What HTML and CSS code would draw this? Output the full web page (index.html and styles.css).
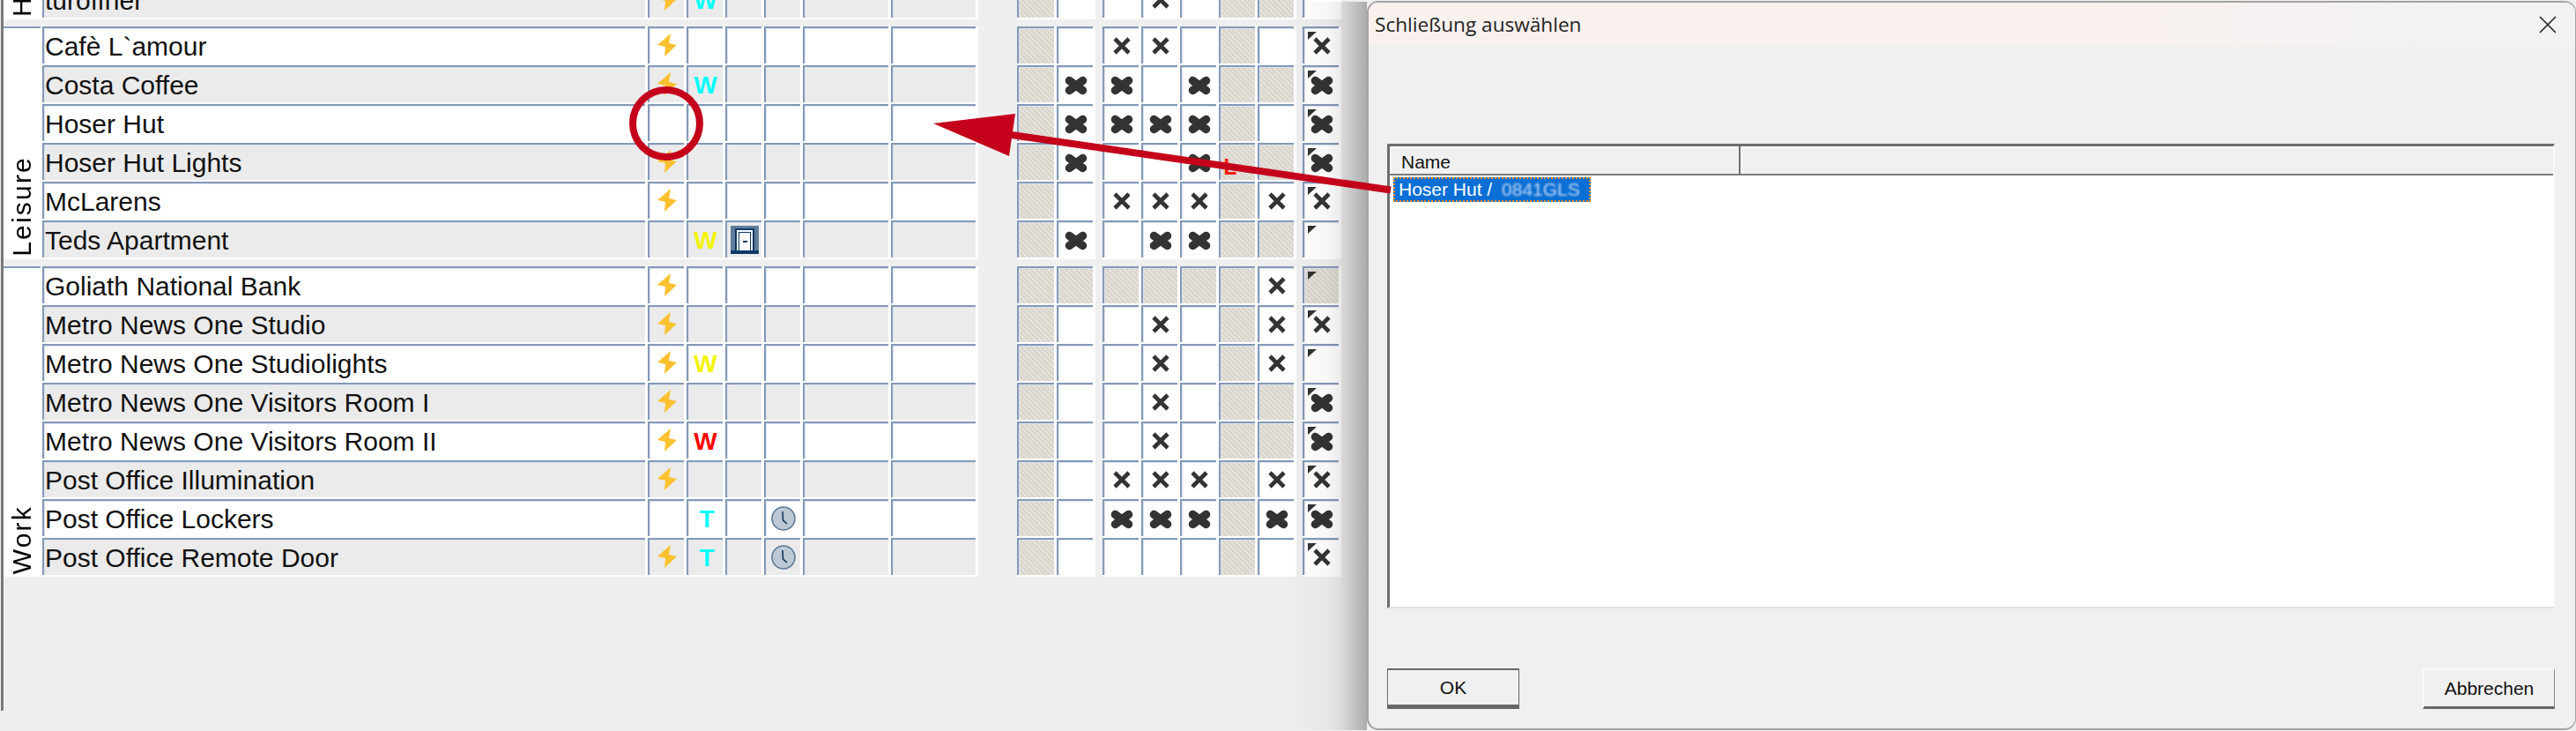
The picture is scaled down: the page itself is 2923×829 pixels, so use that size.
FILE: index.html
```html
<!DOCTYPE html>
<html lang="de">
<head>
    <meta charset="UTF-8">
    <title>Schließung auswählen</title>
    <link rel="stylesheet" href="styles.css">
</head>
<body>

    <svg class="defs">
        <symbol id="bolt" viewBox="0 0 22 26"><polygon points="15,0 0,13 9,15 8,26 22,13 13,11"/></symbol>
        <symbol id="thin" viewBox="0 0 22 22"><path d="M3 3 L19 19 M19 3 L3 19" fill="none" stroke="#333" stroke-width="4.6"/></symbol>
        <symbol id="heavy" viewBox="0 0 26 22"><path d="M5.5 5.5 L20.5 16.5 M20.5 5.5 L5.5 16.5" fill="none" stroke="#333" stroke-width="9.5" stroke-linecap="round"/></symbol>
        <symbol id="flag" viewBox="0 0 10 9"><polygon points="0,0 10,0 0,9" fill="#333"/></symbol>
        <symbol id="door" viewBox="0 0 32 32">
            <rect width="32" height="32" fill="#5f7d99"/>
            <rect x="5" y="3" width="22" height="26" fill="#0d3a66"/>
            <rect x="7" y="5" width="18" height="24" fill="#fff"/>
            <rect x="9" y="7" width="14" height="22" fill="#0d3a66"/>
            <rect x="10" y="8" width="12" height="21" fill="#fff"/>
            <rect x="14" y="17" width="5" height="2" fill="#0d3a66"/>
            <rect y="28" width="32" height="4" fill="#0d3a66"/>
        </symbol>
        <symbol id="clock" viewBox="0 0 28 28">
            <circle cx="14" cy="14" r="13" fill="#bcc8d4" stroke="#5d7a96" stroke-width="1.6"/>
            <path d="M13 6 L13.5 16 L18 20" fill="none" stroke="#12365c" stroke-width="1.6"/>
        </symbol>
    </svg>

    <div class="window">

        <!-- cut off at the top of the screenshot -->
        <section class="group first">
            <div class="group-label"><span>H</span></div>
            <div class="rows">
                <div class="row alt">
                    <div class="blk names">
                        <div class="cell name">turöffner</div>
                        <div class="cell"><svg class="bolt"><use href="#bolt"/></svg></div>
                        <div class="cell"><b class="w cyan">W</b></div>
                        <div class="cell"></div><div class="cell"></div><div class="cell"></div><div class="cell"></div>
                    </div>
                    <div class="blk two"><div class="cell hat"></div><div class="cell"></div></div>
                    <div class="blk five">
                        <div class="cell"></div>
                        <div class="cell"><svg class="x"><use href="#thin"/></svg></div>
                        <div class="cell"></div>
                        <div class="cell hat"></div>
                        <div class="cell hat"></div>
                    </div>
                    <div class="blk one"><div class="cell"></div></div>
                </div>
            </div>
        </section>

        <!-- Leisure -->
        <section class="group">
            <div class="group-label"><span>Leisure</span></div>
            <div class="rows">
                <div class="row">
                    <div class="blk names">
                        <div class="cell name">Cafè L`amour</div>
                        <div class="cell"><svg class="bolt"><use href="#bolt"/></svg></div>
                        <div class="cell"></div><div class="cell"></div><div class="cell"></div><div class="cell"></div><div class="cell"></div>
                    </div>
                    <div class="blk two"><div class="cell hat"></div><div class="cell"></div></div>
                    <div class="blk five">
                        <div class="cell"><svg class="x"><use href="#thin"/></svg></div>
                        <div class="cell"><svg class="x"><use href="#thin"/></svg></div>
                        <div class="cell"></div>
                        <div class="cell hat"></div>
                        <div class="cell"></div>
                    </div>
                    <div class="blk one"><div class="cell flagged"><svg class="flag"><use href="#flag"/></svg><svg class="x"><use href="#thin"/></svg></div></div>
                </div>
                <div class="row alt">
                    <div class="blk names">
                        <div class="cell name">Costa Coffee</div>
                        <div class="cell"><svg class="bolt"><use href="#bolt"/></svg></div>
                        <div class="cell"><b class="w cyan">W</b></div>
                        <div class="cell"></div><div class="cell"></div><div class="cell"></div><div class="cell"></div>
                    </div>
                    <div class="blk two"><div class="cell hat"></div><div class="cell"><svg class="xx"><use href="#heavy"/></svg></div></div>
                    <div class="blk five">
                        <div class="cell"><svg class="xx"><use href="#heavy"/></svg></div>
                        <div class="cell"></div>
                        <div class="cell"><svg class="xx"><use href="#heavy"/></svg></div>
                        <div class="cell hat"></div>
                        <div class="cell hat"></div>
                    </div>
                    <div class="blk one"><div class="cell flagged"><svg class="flag"><use href="#flag"/></svg><svg class="xx"><use href="#heavy"/></svg></div></div>
                </div>
                <div class="row">
                    <div class="blk names">
                        <div class="cell name">Hoser Hut</div>
                        <div class="cell"></div>
                        <div class="cell"></div><div class="cell"></div><div class="cell"></div><div class="cell"></div><div class="cell"></div>
                    </div>
                    <div class="blk two"><div class="cell hat"></div><div class="cell"><svg class="xx"><use href="#heavy"/></svg></div></div>
                    <div class="blk five">
                        <div class="cell"><svg class="xx"><use href="#heavy"/></svg></div>
                        <div class="cell"><svg class="xx"><use href="#heavy"/></svg></div>
                        <div class="cell"><svg class="xx"><use href="#heavy"/></svg></div>
                        <div class="cell hat"></div>
                        <div class="cell"></div>
                    </div>
                    <div class="blk one"><div class="cell flagged"><svg class="flag"><use href="#flag"/></svg><svg class="xx"><use href="#heavy"/></svg></div></div>
                </div>
                <div class="row alt">
                    <div class="blk names">
                        <div class="cell name">Hoser Hut Lights</div>
                        <div class="cell"><svg class="bolt"><use href="#bolt"/></svg></div>
                        <div class="cell"></div><div class="cell"></div><div class="cell"></div><div class="cell"></div><div class="cell"></div>
                    </div>
                    <div class="blk two"><div class="cell hat"></div><div class="cell"><svg class="xx"><use href="#heavy"/></svg></div></div>
                    <div class="blk five">
                        <div class="cell"></div>
                        <div class="cell"></div>
                        <div class="cell"><svg class="xx"><use href="#heavy"/></svg></div>
                        <div class="cell hat"><span class="mark">L</span></div>
                        <div class="cell hat"></div>
                    </div>
                    <div class="blk one"><div class="cell flagged"><svg class="flag"><use href="#flag"/></svg><svg class="xx"><use href="#heavy"/></svg></div></div>
                </div>
                <div class="row">
                    <div class="blk names">
                        <div class="cell name">McLarens</div>
                        <div class="cell"><svg class="bolt"><use href="#bolt"/></svg></div>
                        <div class="cell"></div><div class="cell"></div><div class="cell"></div><div class="cell"></div><div class="cell"></div>
                    </div>
                    <div class="blk two"><div class="cell hat"></div><div class="cell"></div></div>
                    <div class="blk five">
                        <div class="cell"><svg class="x"><use href="#thin"/></svg></div>
                        <div class="cell"><svg class="x"><use href="#thin"/></svg></div>
                        <div class="cell"><svg class="x"><use href="#thin"/></svg></div>
                        <div class="cell hat"></div>
                        <div class="cell"><svg class="x"><use href="#thin"/></svg></div>
                    </div>
                    <div class="blk one"><div class="cell flagged"><svg class="flag"><use href="#flag"/></svg><svg class="x"><use href="#thin"/></svg></div></div>
                </div>
                <div class="row alt">
                    <div class="blk names">
                        <div class="cell name">Teds Apartment</div>
                        <div class="cell"></div>
                        <div class="cell"><b class="w yellow">W</b></div>
                        <div class="cell"><svg class="door"><use href="#door"/></svg></div>
                        <div class="cell"></div><div class="cell"></div><div class="cell"></div>
                    </div>
                    <div class="blk two"><div class="cell hat"></div><div class="cell"><svg class="xx"><use href="#heavy"/></svg></div></div>
                    <div class="blk five">
                        <div class="cell"></div>
                        <div class="cell"><svg class="xx"><use href="#heavy"/></svg></div>
                        <div class="cell"><svg class="xx"><use href="#heavy"/></svg></div>
                        <div class="cell hat"></div>
                        <div class="cell hat"></div>
                    </div>
                    <div class="blk one"><div class="cell flagged"><svg class="flag"><use href="#flag"/></svg></div></div>
                </div>
            </div>
        </section>

        <!-- Work -->
        <section class="group">
            <div class="group-label"><span>Work</span></div>
            <div class="rows">
                <div class="row">
                    <div class="blk names">
                        <div class="cell name">Goliath National Bank</div>
                        <div class="cell"><svg class="bolt"><use href="#bolt"/></svg></div>
                        <div class="cell"></div><div class="cell"></div><div class="cell"></div><div class="cell"></div><div class="cell"></div>
                    </div>
                    <div class="blk two"><div class="cell hat"></div><div class="cell hat"></div></div>
                    <div class="blk five">
                        <div class="cell hat"></div>
                        <div class="cell hat"></div>
                        <div class="cell hat"></div>
                        <div class="cell hat"></div>
                        <div class="cell"><svg class="x"><use href="#thin"/></svg></div>
                    </div>
                    <div class="blk one"><div class="cell flagged hat"><svg class="flag"><use href="#flag"/></svg></div></div>
                </div>
                <div class="row alt">
                    <div class="blk names">
                        <div class="cell name">Metro News One Studio</div>
                        <div class="cell"><svg class="bolt"><use href="#bolt"/></svg></div>
                        <div class="cell"></div><div class="cell"></div><div class="cell"></div><div class="cell"></div><div class="cell"></div>
                    </div>
                    <div class="blk two"><div class="cell hat"></div><div class="cell"></div></div>
                    <div class="blk five">
                        <div class="cell"></div>
                        <div class="cell"><svg class="x"><use href="#thin"/></svg></div>
                        <div class="cell"></div>
                        <div class="cell hat"></div>
                        <div class="cell"><svg class="x"><use href="#thin"/></svg></div>
                    </div>
                    <div class="blk one"><div class="cell flagged"><svg class="flag"><use href="#flag"/></svg><svg class="x"><use href="#thin"/></svg></div></div>
                </div>
                <div class="row">
                    <div class="blk names">
                        <div class="cell name">Metro News One Studiolights</div>
                        <div class="cell"><svg class="bolt"><use href="#bolt"/></svg></div>
                        <div class="cell"><b class="w yellow">W</b></div>
                        <div class="cell"></div><div class="cell"></div><div class="cell"></div><div class="cell"></div>
                    </div>
                    <div class="blk two"><div class="cell hat"></div><div class="cell"></div></div>
                    <div class="blk five">
                        <div class="cell"></div>
                        <div class="cell"><svg class="x"><use href="#thin"/></svg></div>
                        <div class="cell"></div>
                        <div class="cell hat"></div>
                        <div class="cell"><svg class="x"><use href="#thin"/></svg></div>
                    </div>
                    <div class="blk one"><div class="cell flagged"><svg class="flag"><use href="#flag"/></svg></div></div>
                </div>
                <div class="row alt">
                    <div class="blk names">
                        <div class="cell name">Metro News One Visitors Room I</div>
                        <div class="cell"><svg class="bolt"><use href="#bolt"/></svg></div>
                        <div class="cell"></div><div class="cell"></div><div class="cell"></div><div class="cell"></div><div class="cell"></div>
                    </div>
                    <div class="blk two"><div class="cell hat"></div><div class="cell"></div></div>
                    <div class="blk five">
                        <div class="cell"></div>
                        <div class="cell"><svg class="x"><use href="#thin"/></svg></div>
                        <div class="cell"></div>
                        <div class="cell hat"></div>
                        <div class="cell hat"></div>
                    </div>
                    <div class="blk one"><div class="cell flagged"><svg class="flag"><use href="#flag"/></svg><svg class="xx"><use href="#heavy"/></svg></div></div>
                </div>
                <div class="row">
                    <div class="blk names">
                        <div class="cell name">Metro News One Visitors Room II</div>
                        <div class="cell"><svg class="bolt"><use href="#bolt"/></svg></div>
                        <div class="cell"><b class="w red">W</b></div>
                        <div class="cell"></div><div class="cell"></div><div class="cell"></div><div class="cell"></div>
                    </div>
                    <div class="blk two"><div class="cell hat"></div><div class="cell"></div></div>
                    <div class="blk five">
                        <div class="cell"></div>
                        <div class="cell"><svg class="x"><use href="#thin"/></svg></div>
                        <div class="cell"></div>
                        <div class="cell hat"></div>
                        <div class="cell hat"></div>
                    </div>
                    <div class="blk one"><div class="cell flagged"><svg class="flag"><use href="#flag"/></svg><svg class="xx"><use href="#heavy"/></svg></div></div>
                </div>
                <div class="row alt">
                    <div class="blk names">
                        <div class="cell name">Post Office Illumination</div>
                        <div class="cell"><svg class="bolt"><use href="#bolt"/></svg></div>
                        <div class="cell"></div><div class="cell"></div><div class="cell"></div><div class="cell"></div><div class="cell"></div>
                    </div>
                    <div class="blk two"><div class="cell hat"></div><div class="cell"></div></div>
                    <div class="blk five">
                        <div class="cell"><svg class="x"><use href="#thin"/></svg></div>
                        <div class="cell"><svg class="x"><use href="#thin"/></svg></div>
                        <div class="cell"><svg class="x"><use href="#thin"/></svg></div>
                        <div class="cell hat"></div>
                        <div class="cell"><svg class="x"><use href="#thin"/></svg></div>
                    </div>
                    <div class="blk one"><div class="cell flagged"><svg class="flag"><use href="#flag"/></svg><svg class="x"><use href="#thin"/></svg></div></div>
                </div>
                <div class="row">
                    <div class="blk names">
                        <div class="cell name">Post Office Lockers</div>
                        <div class="cell"></div>
                        <div class="cell"><b class="w cyan t">T</b></div>
                        <div class="cell"></div>
                        <div class="cell"><svg class="clock"><use href="#clock"/></svg></div>
                        <div class="cell"></div><div class="cell"></div>
                    </div>
                    <div class="blk two"><div class="cell hat"></div><div class="cell"></div></div>
                    <div class="blk five">
                        <div class="cell"><svg class="xx"><use href="#heavy"/></svg></div>
                        <div class="cell"><svg class="xx"><use href="#heavy"/></svg></div>
                        <div class="cell"><svg class="xx"><use href="#heavy"/></svg></div>
                        <div class="cell hat"></div>
                        <div class="cell"><svg class="xx"><use href="#heavy"/></svg></div>
                    </div>
                    <div class="blk one"><div class="cell flagged"><svg class="flag"><use href="#flag"/></svg><svg class="xx"><use href="#heavy"/></svg></div></div>
                </div>
                <div class="row alt">
                    <div class="blk names">
                        <div class="cell name">Post Office Remote Door</div>
                        <div class="cell"><svg class="bolt"><use href="#bolt"/></svg></div>
                        <div class="cell"><b class="w cyan t">T</b></div>
                        <div class="cell"></div>
                        <div class="cell"><svg class="clock"><use href="#clock"/></svg></div>
                        <div class="cell"></div><div class="cell"></div>
                    </div>
                    <div class="blk two"><div class="cell hat"></div><div class="cell"></div></div>
                    <div class="blk five">
                        <div class="cell"></div>
                        <div class="cell"></div>
                        <div class="cell"></div>
                        <div class="cell hat"></div>
                        <div class="cell"></div>
                    </div>
                    <div class="blk one"><div class="cell flagged"><svg class="flag"><use href="#flag"/></svg><svg class="x"><use href="#thin"/></svg></div></div>
                </div>
            </div>
        </section>
    </div>

    <!-- Dialog -->
    <div class="dialog">
        <div class="dialog-title">
            <span>Schließung auswählen</span>
            <svg class="dialog-close" viewBox="0 0 20 20"><path d="M1 1 L19 19 M19 1 L1 19" fill="none" stroke="#222" stroke-width="1.6"/></svg>
        </div>
        <div class="dialog-body">
            <div class="list">
                <div class="list-head">
                    <div class="list-col">Name</div>
                    <div class="list-col rest"></div>
                </div>
                <div class="list-item">Hoser Hut /&nbsp;<span class="blurred">0841GLS</span></div>
            </div>
            <div class="dialog-buttons">
                <button class="btn default">OK</button>
                <button class="btn">Abbrechen</button>
            </div>
        </div>
    </div>

    <!-- Annotations -->
    <svg class="notes" viewBox="0 0 2923 829">
        <ellipse cx="756" cy="140" rx="38" ry="38" fill="none" stroke="#c4001a" stroke-width="8"/>
        <line x1="1148" y1="153" x2="1578" y2="215.5" stroke="#c4001a" stroke-width="8"/>
        <polygon points="1059,140 1152,129 1145,177" fill="#c4001a"/>
    </svg>

</body>
</html>
```

FILE: styles.css
```css
html, body {
    margin: 0;
    padding: 0;
    height: 829px;
    overflow: hidden;
}

body {
    background: #efefef;
    font-family: "Liberation Sans", Arial, sans-serif;
    color: #111;
    position: relative;
}

.defs {
    display: block;
    width: 0;
    height: 0;
}

/* Main window */
.window {
    margin-left: 1px;
    height: 828px;
    border-left: 3px solid #7a7a7a;
    box-sizing: border-box;
}

.group {
    display: flex;
    margin-bottom: 8px;
}

.group.first {
    margin-top: -22px;
}

.group-label {
    width: 42px;
    background: white;
    border-top: 2px solid #8499b8;
    box-shadow: 2px 0 0 white;
    box-sizing: border-box;
    display: flex;
    flex-direction: column;
    justify-content: flex-end;
    align-items: center;
    padding: 0 0 3px 0;
}

.group-label span {
    writing-mode: vertical-rl;
    transform: rotate(180deg);
    font-size: 30px;
    line-height: 34px;
    letter-spacing: 2.2px;
    color: #000;
}

.rows {
    display: flex;
    flex-direction: column;
    margin-left: 2px;
}

.row {
    display: flex;
    height: 44px;
}

.blk {
    display: grid;
    background: white;
    grid-template-rows: 44px;
}

.names {
    grid-template-columns: 687px 44px 44px 44px 44px 100px 99px;
}

.two {
    margin-left: 44px;
    grid-template-columns: 45px 44px;
}

.five {
    margin-left: 8px;
    grid-template-columns: repeat(5, 44px);
}

.one {
    margin-left: 7px;
    grid-template-columns: 44px;
}

.cell {
    position: relative;
    margin: 0 3px 2px 0;
    border-top: 2px solid #8499b8;
    border-left: 2px solid #8499b8;
    box-shadow: inset 1px 1px 0 #dde3ec;
    display: flex;
    align-items: center;
    justify-content: center;
}

.row.alt .names .cell {
    background: #ebebeb;
}

.cell.hat {
    background: repeating-linear-gradient(45deg, #d9d5cd 0 2px, #e5e2db 2px 4px);
}

.name {
    justify-content: flex-start;
    padding: 2px 0 0 1px;
    font-size: 30px;
    white-space: nowrap;
}

/* Cell content */
.bolt {
    width: 22px;
    height: 26px;
    fill: #fdc130;
    margin-bottom: 2px;
}

.w {
    font-size: 28px;
    line-height: 1;
    padding-top: 2px;
}

.w.t {
    margin-left: 3px;
}

.cyan {
    color: #00ffff;
}

.yellow {
    color: #f4f400;
}

.red {
    color: #ff0000;
}

.door {
    width: 32px;
    height: 32px;
    margin-left: 1px;
}

.clock {
    width: 28px;
    height: 28px;
}

.x {
    width: 22px;
    height: 22px;
}

.xx {
    width: 26px;
    height: 22px;
    margin-top: 2px;
}

.flag {
    position: absolute;
    left: 4px;
    top: 4px;
    width: 10px;
    height: 9px;
}

.mark {
    color: #ff2010;
    font-size: 25px;
    font-weight: bold;
    line-height: 1;
    margin: 10px 17px 0 0;
}

/* Dialog */
.dialog {
    position: absolute;
    left: 1551px;
    top: 1px;
    width: 1372px;
    height: 827px;
    box-sizing: border-box;
    background: #f0f0f0;
    border: 2px solid #a4a4a4;
    border-right-width: 1px;
    border-radius: 13px;
    display: flex;
    flex-direction: column;
}

.dialog::before {
    content: "";
    position: absolute;
    top: -1px;
    bottom: -2px;
    right: 100%;
    width: 91px;
    margin-right: 2px;
    background: linear-gradient(to right, rgba(0,0,0,0), rgba(0,0,0,0.03) 50%, rgba(0,0,0,0.07) 65%, rgba(0,0,0,0.28));
}

.dialog-title {
    height: 49px;
    flex: none;
    border-radius: 11px 11px 0 0;
    background: linear-gradient(to right, #f9f1ee 0, #f9f1ee 60%, #f2f2f2 90%);
    display: flex;
    align-items: center;
    justify-content: space-between;
    padding: 0 21px 0 7px;
    font-family: "Open Sans", sans-serif;
    font-size: 22.6px;
    color: #222;
}

.dialog-close {
    width: 20px;
    height: 20px;
}

.dialog-body {
    flex: 1;
    padding: 111px 23px 0 21px;
    display: flex;
    flex-direction: column;
}

.list {
    height: 527px;
    box-sizing: border-box;
    background: white;
    border-top: 3px solid #6e6e6e;
    border-left: 3px solid #6e6e6e;
    border-right: 2px solid #fafafa;
    border-bottom: 2px solid #e2e2e2;
    font-size: 21px;
}

.list-head {
    display: flex;
    height: 33px;
    background: #f0f0f0;
    border-bottom: 2px solid #7c7c7c;
    box-sizing: border-box;
}

.list-col {
    width: 398px;
    border-right: 2px solid #6e6e6e;
    box-shadow: inset 2px 2px 0 #fafafa;
    box-sizing: border-box;
    padding: 6px 0 0 13px;
    color: #111;
}

.list-col.rest {
    flex: 1;
    border-right: none;
}

.list-item {
    display: flex;
    align-items: center;
    width: 224px;
    height: 28px;
    margin: 2px 0 0 4px;
    box-sizing: border-box;
    padding: 0 0 0 6px;
    background: #0a6fd4;
    outline: 2px dotted #e98a2c;
    outline-offset: -2px;
    color: white;
    font-size: 21px;
    white-space: nowrap;
}

.blurred {
    color: #c4d6f3;
    filter: blur(1.2px);
    margin-left: 5px;
}

.dialog-buttons {
    display: flex;
    justify-content: space-between;
    margin-top: 68px;
}

.btn {
    width: 150px;
    height: 46px;
    background: #f0f0f0;
    border: none;
    border-top: 2px solid #fafafa;
    border-left: 2px solid #fafafa;
    border-right: 1px solid #8a8a8a;
    border-bottom: 3px solid #666;
    font-family: "Liberation Sans", Arial, sans-serif;
    font-size: 21px;
    color: #111;
    padding: 0;
}

.btn.default {
    border-top: 2px solid #666;
    border-left: 1px solid #666;
    border-right: 1px solid #666;
    border-bottom: 5px solid #666;
    box-shadow: inset 1px 1px 0 #fafafa;
}

/* Annotations */
.notes {
    position: absolute;
    left: 0;
    top: 0;
    width: 2923px;
    height: 829px;
    pointer-events: none;
}
```
